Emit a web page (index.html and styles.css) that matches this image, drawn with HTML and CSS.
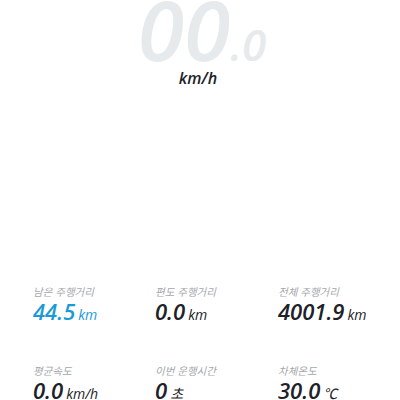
FILE: index.html
```html
<!DOCTYPE html>
<html lang="ko">
<head>
  <meta charset="UTF-8">
  <title>주행 정보</title>
  <link rel="stylesheet" href="styles.css">
</head>
<body>

  <div class="speed">
    <div class="speed-num">00<span class="speed-dec">.0</span></div>
    <div class="speed-unit">km/h</div>
  </div>

  <div class="stats">
    <div class="stat">
      <p class="stat-label">남은 주행거리</p>
      <p class="stat-value blue">44.5<span class="unit">km</span></p>
    </div>
    <div class="stat">
      <p class="stat-label">편도 주행거리</p>
      <p class="stat-value">0.0<span class="unit">km</span></p>
    </div>
    <div class="stat">
      <p class="stat-label">전체 주행거리</p>
      <p class="stat-value">4001.9<span class="unit">km</span></p>
    </div>
    <div class="stat">
      <p class="stat-label">평균속도</p>
      <p class="stat-value">0.0<span class="unit">km/h</span></p>
    </div>
    <div class="stat">
      <p class="stat-label">이번 운행시간</p>
      <p class="stat-value">0<span class="unit">초</span></p>
    </div>
    <div class="stat">
      <p class="stat-label">차체온도</p>
      <p class="stat-value">30.0<span class="unit">℃</span></p>
    </div>
  </div>

</body>
</html>
```

FILE: styles.css
```css
body {
  margin: 0;
  padding: 0;
  background: #fff;
  font-family: 'Open Sans', 'Noto Sans CJK KR', sans-serif;
  font-style: italic;
  color: #1d2229;
}

.speed {
  text-align: center;
  height: 284px;
}

.speed-num {
  font-size: 84px;
  font-weight: 600;
  font-stretch: 95%;
  line-height: 58px;
  color: #e7eaec;
  padding-left: 4px;
}

.speed-dec {
  font-size: 44px;
  line-height: 0;
}

.speed-unit {
  font-size: 16px;
  font-weight: 600;
  font-stretch: 88%;
  line-height: 20px;
  margin-top: 10px;
  margin-left: -4px;
}

.stats {
  display: grid;
  grid-template-columns: 122px 123px 1fr;
  padding-left: 33px;
  row-gap: 36px;
}

.stat p {
  margin: 0;
}

.stat-label {
  font-family: 'Noto Sans CJK KR', sans-serif;
  font-size: 10.5px;
  color: #a3a7ab;
  line-height: 15px;
}

.stat-value {
  font-size: 22px;
  font-weight: 600;
  font-stretch: 90%;
  line-height: 24px;
}

.stat-value.blue {
  color: #1b9ad7;
}

.unit {
  font-size: 14px;
  font-weight: 400;
  font-stretch: 95%;
  margin-left: 3px;
}
```
